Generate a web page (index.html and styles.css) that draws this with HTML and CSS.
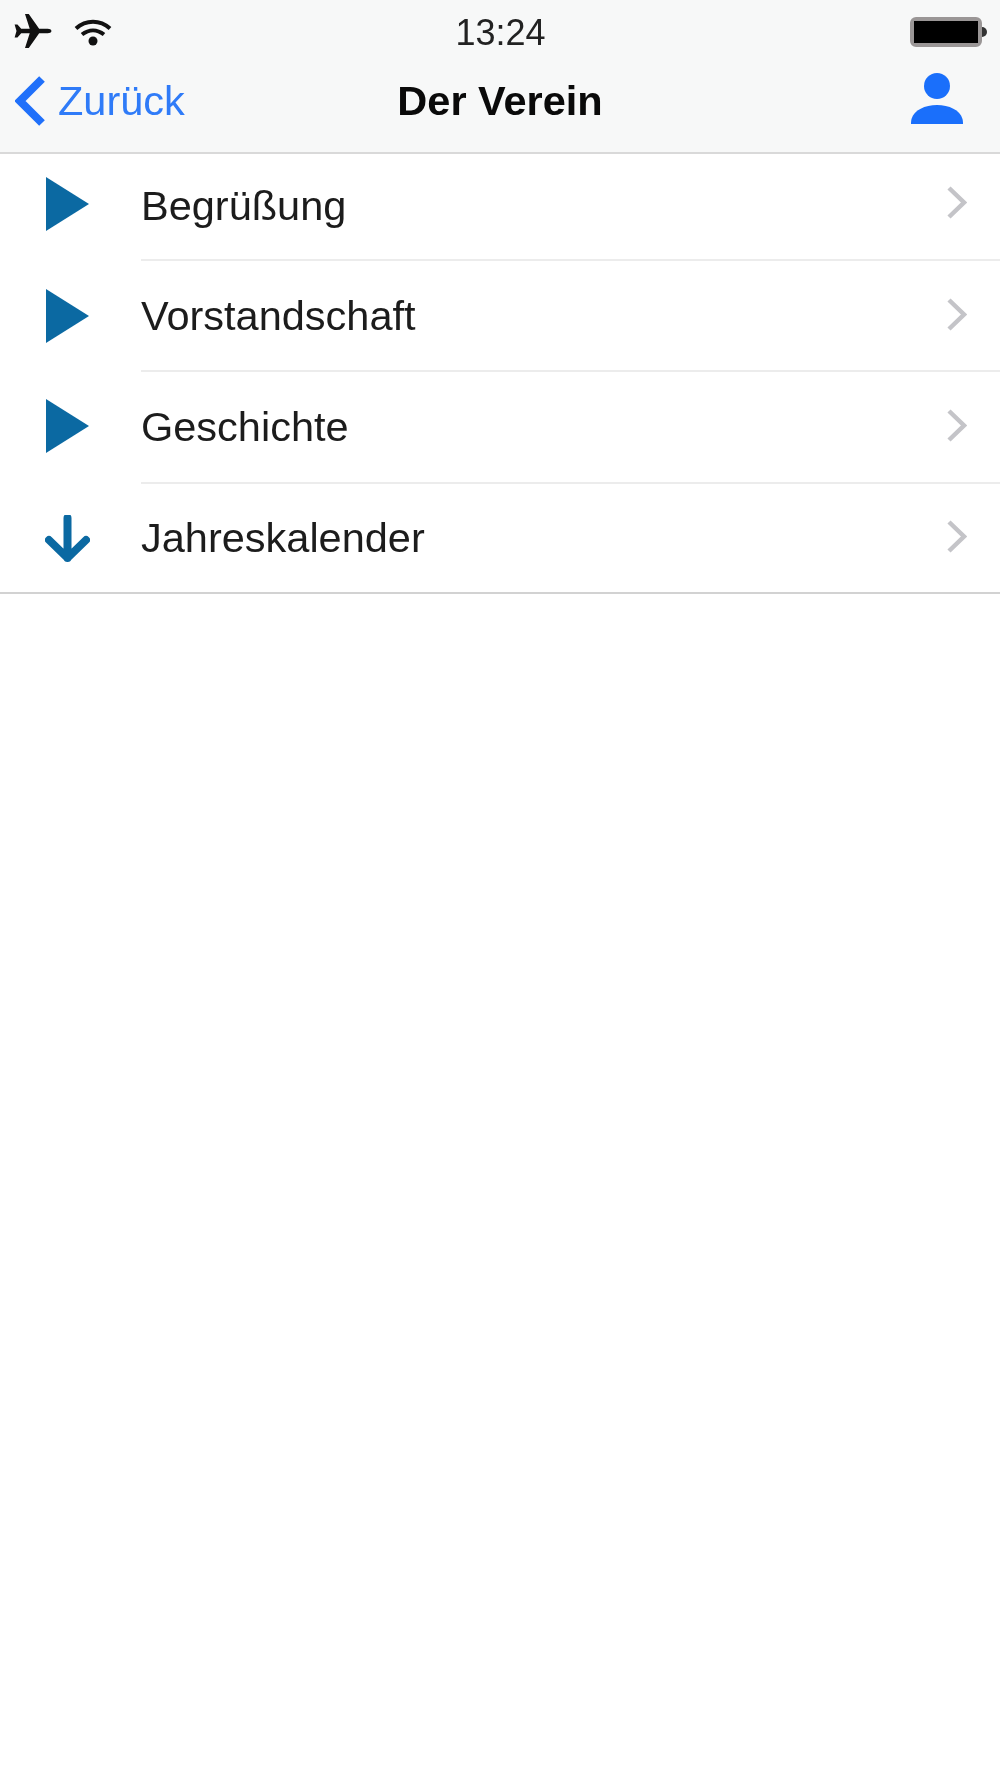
FILE: index.html
```html
<!DOCTYPE html>
<html lang="de">
<head>
<meta charset="utf-8">
<title>Der Verein</title>
<link rel="stylesheet" href="styles.css">
</head>
<body>
<div class="app">
  <header class="top">
    <div class="status">
      <div class="status-left">
        <svg class="plane" viewBox="0 0 40 36"><path d="M39 18c0-1.600-2-2.400-4-2.400h-9L15 0h-4l5 15.600H7L3 11H0l2 7-2 7h3l4-4.600h9L11 36h4l11-15.600h9c2 0 4-.8 4-2.400z"/></svg>
        <svg class="wifi" viewBox="0 0 38 28"><path class="wifi-arc" d="M2 10.500c10-9 24-9 34 0M8 16.500c7-5.500 15-5.500 22 0"/><circle cx="19" cy="23" r="4.500"/></svg>
      </div>
      <div class="time">13:24</div>
      <div class="status-right">
        <div class="battery"><div class="battery-fill"></div></div>
        <div class="battery-cap"></div>
      </div>
    </div>
    <nav class="nav">
      <div class="back">
        <svg class="back-chevron" viewBox="0 0 30 50"><path d="M27 3 5 25l22 22"/></svg>
        <span class="back-label">Zurück</span>
      </div>
      <div class="title">Der Verein</div>
      <svg class="person" viewBox="0 0 52 51"><circle cx="26" cy="13" r="13"/><path d="M0 51c0-1 0-3 .5-5C3 37 14 32 26 32s23 5 25.500 14c.5 2 .5 4 .5 5z"/></svg>
    </nav>
  </header>
  <main class="list">
    <div class="row row-a">
      <div class="cell-icon"><svg class="tri" viewBox="0 0 43 54"><path d="M0 0l43 27L0 54z"/></svg></div>
      <div class="cell-body"><span class="label">Begrüßung</span><svg class="chev" viewBox="0 0 20 35"><path d="M2 3l15 14.500L2 32"/></svg></div>
    </div>
    <div class="row row-b">
      <div class="cell-icon"><svg class="tri" viewBox="0 0 43 54"><path d="M0 0l43 27L0 54z"/></svg></div>
      <div class="cell-body"><span class="label">Vorstandschaft</span><svg class="chev" viewBox="0 0 20 35"><path d="M2 3l15 14.500L2 32"/></svg></div>
    </div>
    <div class="row row-c">
      <div class="cell-icon"><svg class="tri" viewBox="0 0 43 54"><path d="M0 0l43 27L0 54z"/></svg></div>
      <div class="cell-body"><span class="label">Geschichte</span><svg class="chev" viewBox="0 0 20 35"><path d="M2 3l15 14.500L2 32"/></svg></div>
    </div>
    <div class="row row-d">
      <div class="cell-icon"><svg class="arrow" viewBox="0 0 45 47"><path d="M22.500 3v40M4 25l18.500 18L41 25"/></svg></div>
      <div class="cell-body cell-last"><span class="label">Jahreskalender</span><svg class="chev" viewBox="0 0 20 35"><path d="M2 3l15 14.500L2 32"/></svg></div>
    </div>
  </main>
</div>
</body>
</html>
```

FILE: styles.css
```css
* { box-sizing: border-box; }
html, body { margin: 0; padding: 0; background: #fff; }
body { font-family: "Liberation Sans", Arial, sans-serif; color: #1a1a1a; }
.app { width: 1000px; height: 1778px; background: #fff; overflow: hidden; filter: blur(0.6px); }

.top { height: 154px; background: #f7f8f8; border-bottom: 2px solid #d9d9d9; }

.status { height: 60px; padding: 14px 13px 0 14px; display: grid; grid-template-columns: 1fr auto 1fr; align-items: start; }
.status-left { display: flex; align-items: flex-start; gap: 21px; }
.plane { width: 39px; height: 34px; fill: #111; }
.wifi { width: 38px; height: 28px; margin-top: 4px; fill: #111; }
.wifi-arc { fill: none; stroke: #111; stroke-width: 4; }
.time { font-size: 36px; line-height: 36px; color: #222; margin-top: 1px; }
.status-right { display: flex; justify-content: flex-end; align-items: center; margin-top: 3px; }
.battery { width: 72px; height: 30px; border: 4px solid #9a9696; border-radius: 6px; }
.battery-fill { height: 100%; background: #000; }
.battery-cap { width: 5px; height: 10px; background: #333; border-radius: 0 5px 5px 0; }

.nav { height: 92px; padding: 0 37px 0 15px; position: relative; display: flex; align-items: flex-start; justify-content: space-between; }
.back { display: flex; align-items: flex-start; gap: 13px; padding-top: 16px; }
.back-chevron { width: 30px; height: 50px; fill: none; stroke: #2070fa; stroke-width: 8; }
.back-label { font-size: 41.5px; line-height: 46px; color: #2f7bf8; margin-top: 2px; }
.title { position: absolute; left: 0; right: 0; top: 19px; text-align: center; font-size: 41.5px; line-height: 44px; font-weight: 700; color: #0a0a0a; }
.person { width: 52px; height: 51px; margin-top: 13px; fill: #1a6ffb; }

.list { border-bottom: 2px solid #d2d2d2; height: 440px; display: flex; flex-direction: column; }
.row { display: flex; }
.row-a { height: 107px; }
.row-b { height: 111px; }
.row-c { height: 112px; }
.row-d { height: 108px; }
.cell-icon { width: 141px; flex: none; padding-left: 46px; }
.row-a .cell-icon { padding-top: 23px; }
.row-b .cell-icon { padding-top: 28px; }
.row-c .cell-icon { padding-top: 27px; }
.row-d .cell-icon { padding-top: 31px; padding-left: 45px; }
.tri { display: block; width: 43px; height: 54px; fill: #0b69a2; }
.arrow { display: block; width: 45px; height: 47px; fill: none; stroke: #0b69a2; stroke-width: 8; stroke-linecap: round; stroke-linejoin: round; }
.cell-body { flex: 1; display: flex; align-items: center; justify-content: space-between; padding-right: 33px; border-bottom: 2px solid #ececec; }
.row-a .cell-body { padding-bottom: 1px; }
.cell-last { border-bottom: 0; }
.label { font-size: 41.5px; line-height: 46px; color: #1c1c1c; }
.chev { width: 20px; height: 35px; margin-bottom: 4px; fill: none; stroke: #c4c4c8; stroke-width: 4.500; }
.row-a .chev { margin-bottom: 8px; }
.row-b .chev { margin-bottom: 3px; }
```
